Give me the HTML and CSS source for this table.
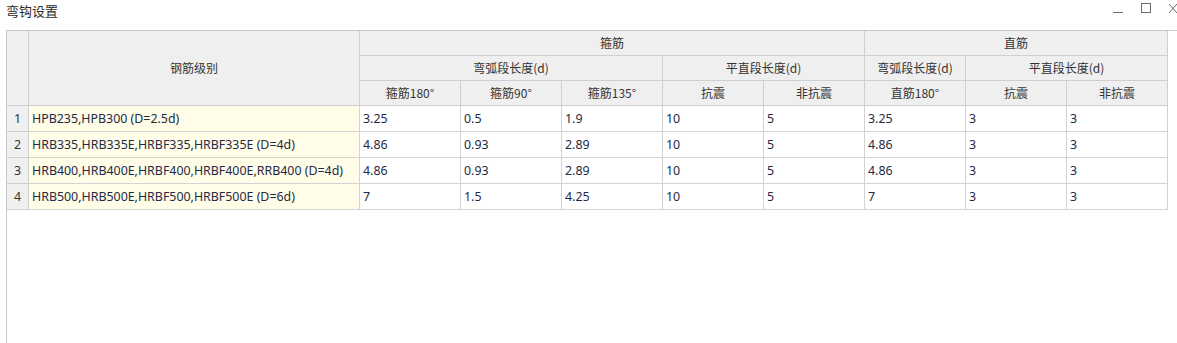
FILE: index.html
```html
<!DOCTYPE html>
<html lang="zh">
<head>
<meta charset="utf-8">
<title>弯钩设置</title>
<link rel="stylesheet" href="styles.css">
</head>
<body>
<div class="titlebar">
  <div class="title">弯钩设置</div>
  <div class="controls">
    <svg class="ctl" width="12" height="12" viewBox="0 0 12 12"><path d="M1 9.5h10" stroke="#6b6b6b" stroke-width="1"/></svg>
    <svg class="ctl" width="12" height="12" viewBox="0 0 12 12"><rect x="1.5" y="0.5" width="9" height="9" fill="none" stroke="#6b6b6b" stroke-width="1"/></svg>
    <svg class="ctl close" width="10" height="12" viewBox="0 0 10 12"><path d="M1 1l8 9M9 1l-8 9" stroke="#6b6b6b" stroke-width="1"/></svg>
  </div>
</div>
<div class="grid">
  <table class="tbl">
    <colgroup>
      <col class="c-num"><col class="c-name">
      <col class="c-val"><col class="c-val"><col class="c-val"><col class="c-val"><col class="c-val"><col class="c-val"><col class="c-val"><col class="c-val">
    </colgroup>
    <thead>
      <tr>
        <th rowspan="3" class="corner"></th>
        <th rowspan="3">钢筋级别</th>
        <th colspan="5">箍筋</th>
        <th colspan="3">直筋</th>
      </tr>
      <tr>
        <th colspan="3">弯弧段长度(d)</th>
        <th colspan="2">平直段长度(d)</th>
        <th>弯弧段长度(d)</th>
        <th colspan="2">平直段长度(d)</th>
      </tr>
      <tr>
        <th>箍筋180°</th><th>箍筋90°</th><th>箍筋135°</th><th>抗震</th><th>非抗震</th>
        <th>直筋180°</th><th>抗震</th><th>非抗震</th>
      </tr>
    </thead>
    <tbody>
      <tr><td class="num">1</td><td class="name">HPB235,HPB300 (D=2.5d)</td><td>3.25</td><td>0.5</td><td>1.9</td><td>10</td><td>5</td><td>3.25</td><td>3</td><td>3</td></tr>
      <tr><td class="num">2</td><td class="name">HRB335,HRB335E,HRBF335,HRBF335E (D=4d)</td><td>4.86</td><td>0.93</td><td>2.89</td><td>10</td><td>5</td><td>4.86</td><td>3</td><td>3</td></tr>
      <tr><td class="num">3</td><td class="name">HRB400,HRB400E,HRBF400,HRBF400E,RRB400 (D=4d)</td><td>4.86</td><td>0.93</td><td>2.89</td><td>10</td><td>5</td><td>4.86</td><td>3</td><td>3</td></tr>
      <tr><td class="num">4</td><td class="name">HRB500,HRB500E,HRBF500,HRBF500E (D=6d)</td><td>7</td><td>1.5</td><td>4.25</td><td>10</td><td>5</td><td>7</td><td>3</td><td>3</td></tr>
    </tbody>
  </table>
</div>
</body>
</html>
```

FILE: styles.css
```css
html, body {
  margin: 0;
  padding: 0;
  background: #ffffff;
  height: 100%;
  overflow: hidden;
}
body {
  font-family: "Noto Sans", "Noto Sans CJK SC", sans-serif;
  font-size: 12px;
  color: #333333;
}
.titlebar {
  height: 30px;
  display: flex;
  justify-content: space-between;
  align-items: flex-start;
}
.title {
  padding-left: 6px;
  padding-top: 1px;
  font-size: 13px;
  line-height: 20px;
  color: #2b2b2b;
  font-family: "Noto Sans CJK SC", sans-serif;
}
.controls {
  display: flex;
  gap: 16px;
  padding-top: 3px;
  margin-right: -1px;
}
.ctl { display: block; }
.grid {
  margin-left: 6px;
  border-left: 1px solid #c8c8c8;
  border-top: 1px solid #c8c8c8;
  height: 313px;
}
.tbl {
  border-collapse: separate;
  border-spacing: 0;
  table-layout: fixed;
  width: 1161px;
}
.c-num { width: 22px; }
.c-name { width: 331px; }
.c-val { width: 101px; }
.tbl th, .tbl td {
  box-sizing: border-box;
  border-right: 1px solid #d3d3d3;
  border-bottom: 1px solid #d3d3d3;
  padding: 0;
  white-space: nowrap;
  overflow: hidden;
}
.tbl th {
  height: 25px;
  background: #efefef;
  font-weight: normal;
  text-align: center;
  color: #333333;
  font-family: "Noto Sans CJK SC", sans-serif;
  font-size: 12px;
  line-height: 16px;
  border-color: #cfcfcf;
}
.tbl th.corner { background: #efefef; }
.tbl td {
  height: 26px;
  padding-left: 3px;
  color: #1f2a44;
  font-size: 12.4px;
  line-height: 16px;
  text-align: left;
}
.tbl td.num {
  background: #f0f0f0;
  text-align: center;
  padding-left: 0;
  color: #333333;
  border-color: #cfcfcf;
}
.tbl td.name {
  background: #fffde8;
}
```
